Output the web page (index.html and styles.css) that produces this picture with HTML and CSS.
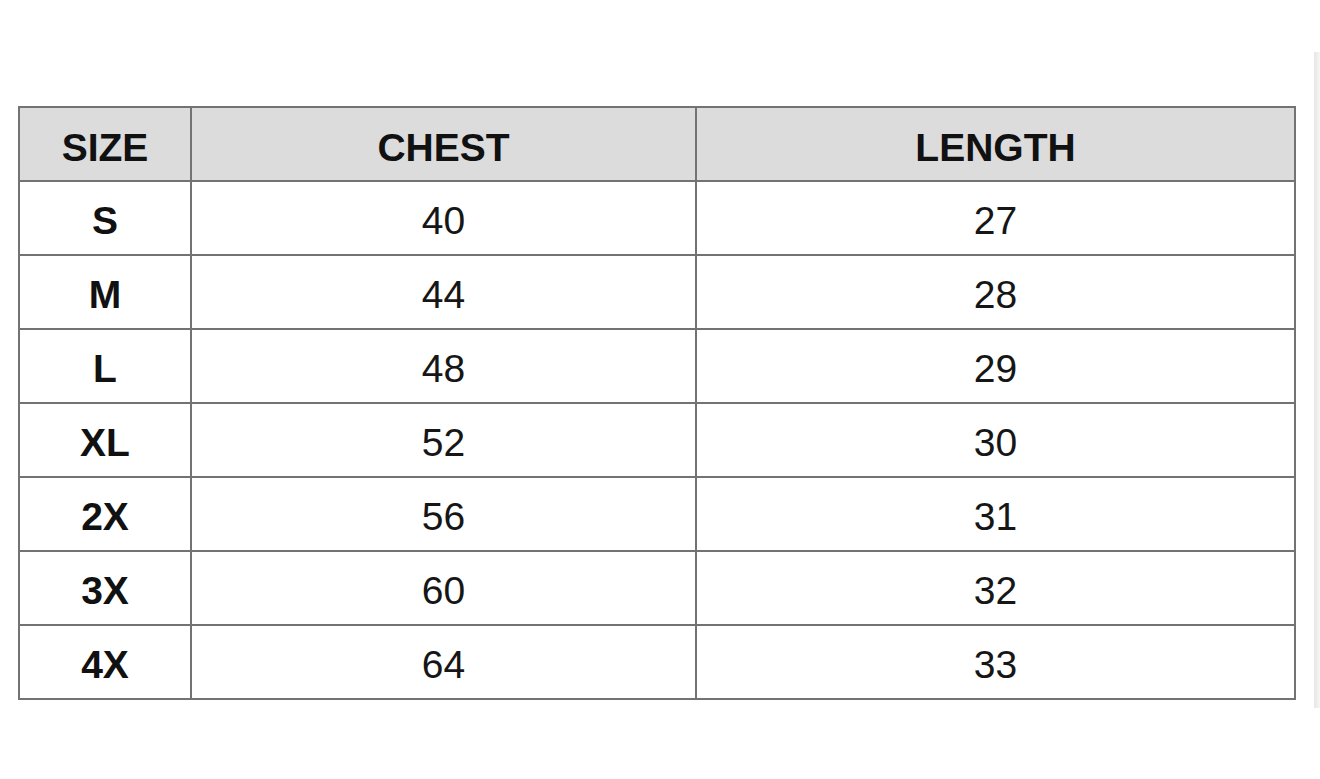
FILE: index.html
```html
<!DOCTYPE html>
<html>
<head>
<meta charset="utf-8">
<link rel="stylesheet" href="styles.css">
</head>
<body>
<div class="page">
  <div class="chart">
    <div class="cell head">SIZE</div><div class="cell head">CHEST</div><div class="cell head">LENGTH</div>
    <div class="cell size">S</div><div class="cell">40</div><div class="cell">27</div>
    <div class="cell size">M</div><div class="cell">44</div><div class="cell">28</div>
    <div class="cell size">L</div><div class="cell">48</div><div class="cell">29</div>
    <div class="cell size">XL</div><div class="cell">52</div><div class="cell">30</div>
    <div class="cell size">2X</div><div class="cell">56</div><div class="cell">31</div>
    <div class="cell size">3X</div><div class="cell">60</div><div class="cell">32</div>
    <div class="cell size">4X</div><div class="cell">64</div><div class="cell">33</div>
  </div>
  <div class="edge"></div>
</div>
</body>
</html>
```

FILE: styles.css
```css
html, body {
  margin: 0;
  padding: 0;
  background: #ffffff;
}
.page {
  display: flex;
  align-items: flex-start;
  gap: 18px;
  padding: 52px 0 0 18px;
  height: 779px;
  box-sizing: border-box;
}
.chart {
  margin-top: 54px;
  width: 1278px;
  box-sizing: border-box;
  display: grid;
  grid-template-columns: 170px 503px 597px;
  grid-auto-rows: 72px;
  gap: 2px;
  padding: 2px;
  background: #737373;
  font-family: "Liberation Sans", Arial, sans-serif;
  color: #161616;
}
.cell {
  background: #ffffff;
  display: flex;
  align-items: center;
  justify-content: center;
  font-size: 39px;
  padding-top: 6px;
  box-sizing: border-box;
}
.head {
  background: #dcdcdc;
  font-weight: bold;
  padding-top: 8px;
  color: #111111;
}
.size {
  font-weight: bold;
  color: #111111;
}
.edge {
  width: 6px;
  height: 656px;
  background: linear-gradient(to right, #e6e6e6, #f6f6f6);
}
```
